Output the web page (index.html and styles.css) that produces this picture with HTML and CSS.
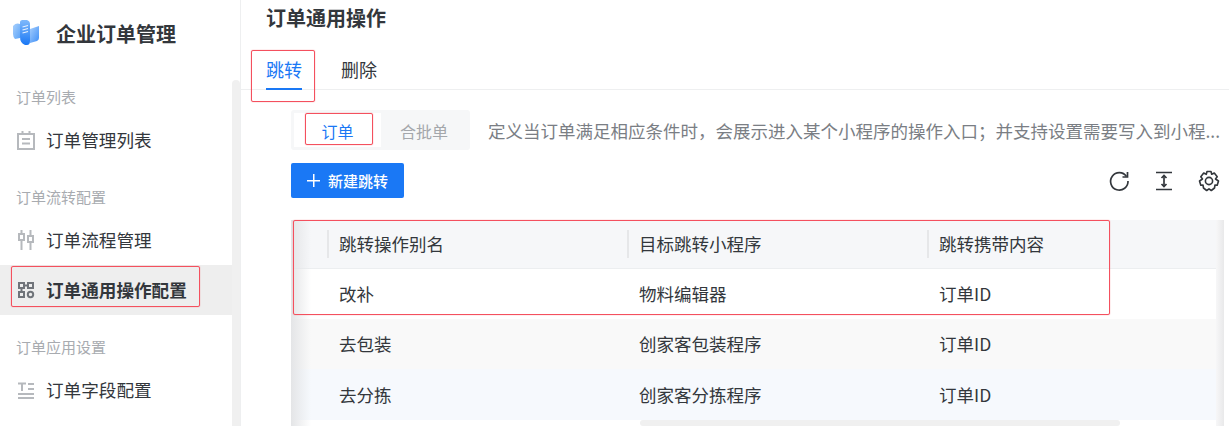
FILE: index.html
```html
<!DOCTYPE html>
<html lang="zh-CN">
<head>
	<meta charset="UTF-8">
	<title>订单通用操作</title>
	<link rel="stylesheet" href="styles.css">
</head>
<body>
	<div class="page">
		<aside class="side">
			<div class="brand">
				<svg class="logo" width="28" height="28" viewBox="0 0 28 28">
					<defs>
						<linearGradient id="logoA" x1="0" y1="0" x2="1" y2="1">
							<stop offset="0" stop-color="#a9d0fc"/>
							<stop offset="1" stop-color="#5ea5f8"/>
						</linearGradient>
						<linearGradient id="logoB" x1="0" y1="0" x2="0" y2="1">
							<stop offset="0" stop-color="#7fb9fb"/>
							<stop offset="1" stop-color="#1a78f5"/>
						</linearGradient>
						<linearGradient id="logoC" x1="0" y1="0" x2="1" y2="1">
							<stop offset="0" stop-color="#a5cdfc"/>
							<stop offset="1" stop-color="#3f8ff7"/>
						</linearGradient>
					</defs>
					<path d="M1 7 Q4 3.500 8 5 V19 L3 20 Q1 18 1 15Z" fill="url(#logoA)"/>
					<path d="M8 3 Q8 1.500 10 1 L15 1 Q18 2 18 5 V22 Q18 26 15 26 L13 26 Q8 24 8 18Z" fill="url(#logoB)"/>
					<path d="M10.500 8L16 6.500M10.500 11L16 9.500M10.500 14L16 12.500" stroke="#e6f1fe" stroke-width="1.100" fill="none"/>
					<path d="M18 10 L27 7 V19 Q27 21 25 22 L18 24Z" fill="url(#logoC)"/>
				</svg>
				<span class="brand-name">企业订单管理</span>
			</div>
			<div class="side-body">
				<div class="menu">
					<div class="group">订单列表</div>
					<div class="item">
						<svg class="ico" width="18" height="20" viewBox="0 0 18 20" fill="none" stroke="#b6b9bd" stroke-width="2">
							<path d="M1 4H17V19H1Z"/><path d="M5.500 1V5M12.500 1V5M5 9H13M5 13.500H13"/>
						</svg>
						<span>订单管理列表</span>
					</div>
					<div class="group">订单流转配置</div>
					<div class="item">
						<svg class="ico" width="18" height="20" viewBox="0 0 18 20" fill="none" stroke="#b6b9bd" stroke-width="2">
							<path d="M4.500 0V4M4.500 10V20M13.500 0V6M13.500 12V20"/><rect x="2" y="4" width="5" height="6"/><rect x="11" y="6" width="5" height="6"/>
						</svg>
						<span>订单流程管理</span>
					</div>
					<div class="item active">
						<svg class="ico" width="18" height="18" viewBox="0 0 18 18" fill="none" stroke="#70747a" stroke-width="2">
							<rect x="2" y="2" width="5" height="5"/><rect x="11" y="2" width="5" height="5"/><rect x="2" y="11" width="5" height="5"/><circle cx="13.500" cy="13.500" r="2.700"/>
							<path d="M7 4.500H11M4.500 7V11"/>
						</svg>
						<span>订单通用操作配置</span>
					</div>
					<div class="group">订单应用设置</div>
					<div class="item">
						<svg class="ico" width="18" height="18" viewBox="0 0 18 18" fill="none" stroke="#b6b9bd" stroke-width="2">
							<path d="M1 2.500H9M5 2.500V10M11 3H17M11 8H17M1 13H17M1 17H17"/>
						</svg>
						<span>订单字段配置</span>
					</div>
				</div>
				<div class="side-scroll"></div>
			</div>
		</aside>

		<main class="main">
			<h1 class="title">订单通用操作</h1>
			<div class="tabs">
				<div class="tab on">跳转</div>
				<div class="tab">删除</div>
			</div>
			<div class="content">
				<div class="bar">
					<div class="switch">
						<div class="switch-item on">订单</div>
						<div class="switch-item">合批单</div>
					</div>
					<p class="desc">定义当订单满足相应条件时，会展示进入某个小程序的操作入口；并支持设置需要写入到小程...</p>
				</div>
				<div class="tools">
					<button class="btn"><span class="plus"></span>新建跳转</button>
					<div class="tool-icons">
						<svg width="22" height="22" viewBox="0 0 22 22" fill="none" stroke="#33373c" stroke-width="1.700">
							<path d="M18.500 6.500A8.700 8.700 0 1 0 20 11"/><path d="M19.500 2V7H14.500"/>
						</svg>
						<svg width="22" height="22" viewBox="0 0 22 22" fill="none" stroke="#33373c" stroke-width="1.700">
							<path d="M3 2.500H19M3 19.500H19M11 6V16"/><path d="M8.500 8L11 5.500L13.500 8M8.500 14L11 16.500L13.500 14"/>
						</svg>
						<svg width="22" height="22" viewBox="0 0 22 22" fill="none" stroke="#33373c" stroke-width="1.600">
							<path d="M9 1.500H13L13.700 4.300L16.300 3L19.200 6.700L17.500 9L20.500 11L19.200 15.300L17 15L16.500 18L13.300 20.500L11 18.800L8.700 20.500L5.500 18L5 15L2.800 15.300L1.500 11L4.500 9L2.800 6.700L5.700 3L8.300 4.300Z" stroke-linejoin="round"/><circle cx="11" cy="11" r="3.600"/>
						</svg>
					</div>
				</div>
				<div class="table-wrap">
					<table class="table">
						<thead>
							<tr><th class="gutter"></th><th>跳转操作别名</th><th>目标跳转小程序</th><th>跳转携带内容</th></tr>
						</thead>
						<tbody>
							<tr><td class="gutter"></td><td>改补</td><td>物料编辑器</td><td>订单ID</td></tr>
							<tr class="gray"><td class="gutter"></td><td>去包装</td><td>创家客包装程序</td><td>订单ID</td></tr>
							<tr class="blue"><td class="gutter"></td><td>去分拣</td><td>创家客分拣程序</td><td>订单ID</td></tr>
						</tbody>
					</table>
					<div class="shade-left"></div>
					<div class="shade-right"></div>
				</div>
				<div class="h-scroll"><div class="h-thumb"></div></div>
			</div>
		</main>
	</div>

	<!-- 红框标注 -->
	<div class="mark mark-menu"></div>
	<div class="mark mark-tab"></div>
	<div class="mark mark-switch"></div>
	<div class="mark mark-table"></div>
</body>
</html>
```

FILE: styles.css
```css
* {
	box-sizing: border-box;
}
html, body {
	margin: 0;
	padding: 0;
	height: 426px;
	overflow: hidden;
}
body {
	position: relative;
	font-family: "Noto Sans CJK SC", "Liberation Sans", sans-serif;
	color: #33373c;
	background: #fff;
}
.page {
	display: flex;
	height: 426px;
}

/* 左侧菜单 */
.side {
	flex: none;
	width: 241px;
	border-right: 1px solid #eeeff0;
}
.brand {
	display: flex;
	align-items: center;
	height: 66px;
	padding-left: 12px;
}
.logo {
	margin-right: 16px;
}
.brand-name {
	font-size: 20px;
	font-weight: 700;
	color: #33373c;
}
.side-body {
	display: flex;
	height: 360px;
}
.menu {
	flex: 1;
	padding-top: 14px;
}
.side-scroll {
	flex: none;
	width: 8px;
	margin-top: 14px;
	background: #f0f0f0;
	border-radius: 4px 4px 0 0;
}
.group {
	height: 34px;
	margin-bottom: 1px;
	padding-left: 16px;
	font-size: 15px;
	line-height: 34px;
	color: #a8abb0;
}
.group:not(:first-child) {
	margin-top: 15px;
}
.item {
	display: flex;
	align-items: center;
	height: 50px;
	padding-left: 17px;
	font-size: 17.600px;
	color: #33373c;
}
.item span {
	margin-top: -2px;
}
.item .ico {
	margin-right: 11px;
}
.item.active {
	font-weight: 700;
	background: #eeeeee;
}

/* 右侧内容 */
.main {
	flex: 1;
	min-width: 0;
}
.title {
	margin: 0;
	height: 38px;
	padding-left: 25px;
	font-size: 20px;
	font-weight: 700;
	line-height: 36px;
}
.tabs {
	display: flex;
	gap: 39px;
	height: 52px;
	padding-left: 25px;
	border-bottom: 1px solid #eeeff0;
}
.tab {
	height: 52px;
	padding-top: 19px;
	font-size: 18px;
	line-height: 24px;
	color: #33373c;
}
.tab.on {
	color: #1a78f5;
	border-bottom: 2px solid #1a78f5;
}
.content {
	padding: 20px 0 0 50px;
}
.bar {
	display: flex;
	align-items: center;
	height: 40px;
}
.switch {
	display: flex;
	flex: none;
	height: 40px;
	padding: 3px;
	background: #f6f7f8;
	border-radius: 3px;
}
.switch-item {
	width: 87px;
	font-size: 16px;
	line-height: 36px;
	text-align: center;
	color: #a4a7ab;
	white-space: nowrap;
}
.switch-item.on {
	color: #1a78f5;
	background: #fff;
}
.switch-item:last-child {
	width: 86px;
}
.desc {
	margin: 0 0 0 18px;
	font-size: 17.500px;
	color: #7a7e84;
	white-space: nowrap;
}
.tools {
	display: flex;
	align-items: center;
	justify-content: space-between;
	margin-top: 13px;
	height: 35px;
}
.btn {
	display: flex;
	align-items: center;
	width: 113px;
	height: 35px;
	padding: 0 0 0 16px;
	border: 0;
	border-radius: 2px;
	font: 500 15px "Noto Sans CJK SC", "Liberation Sans", sans-serif;
	color: #fff;
	background: #1a78f5;
}
.plus {
	width: 13px;
	height: 13px;
	margin-right: 8px;
	background: linear-gradient(#fff, #fff) center / 100% 1.500px no-repeat, linear-gradient(#fff, #fff) center / 1.500px 100% no-repeat;
}
.tool-icons {
	display: flex;
	gap: 23px;
	padding-right: 9px;
}
.table-wrap {
	position: relative;
	margin-top: 22px;
	width: 933px;
}
.table {
	width: 100%;
	border-collapse: separate;
	border-spacing: 0;
	table-layout: fixed;
	font-size: 17.500px;
}
.table th {
	position: relative;
	height: 49px;
	padding: 0 0 1px 12px;
	font-weight: 400;
	text-align: left;
	background: #f6f7f9;
	border-bottom: 1px solid #eceef0;
}
.table th:not(.gutter)::before {
	content: "";
	position: absolute;
	left: 0;
	top: 10px;
	width: 2px;
	height: 28px;
	background: #e6e7e9;
}
.table td {
	height: 50px;
	padding: 0 0 2px 12px;
}
.table tr.blue td {
	height: 51px;
	padding-bottom: 1px;
}
.table .gutter {
	width: 36px;
	padding: 0;
}
.table th:nth-child(2), .table th:nth-child(3) {
	width: 300px;
}
.table tr.gray td {
	background: #f9f9f9;
}
.table tr.blue td {
	background: #f6f9fd;
}
.shade-left {
	position: absolute;
	left: 0;
	top: 0;
	bottom: -6px;
	width: 20px;
	background: linear-gradient(to right, #e4e5e7, rgba(240, 240, 242, 0));
}
.shade-right {
	position: absolute;
	right: 0;
	top: 0;
	bottom: -6px;
	width: 8px;
	background: linear-gradient(to right, #f7f7f8, #e9e9ea);
}
.h-scroll {
	width: 933px;
	height: 6px;
	padding-left: 349px;
}
.h-thumb {
	width: 480px;
	height: 6px;
	background: #f0f0f0;
	border-radius: 3px;
}

/* 红框标注 */
.mark {
	position: absolute;
	border: 1px solid #f4505e;
	border-radius: 2px;
	box-shadow: 0 0 1px #f4505e;
}
.mark-menu {
	left: 11px;
	top: 266px;
	width: 189px;
	height: 41px;
}
.mark-tab {
	left: 251px;
	top: 50px;
	width: 64px;
	height: 52px;
}
.mark-switch {
	left: 305px;
	top: 113px;
	width: 68px;
	height: 32px;
}
.mark-table {
	left: 293px;
	top: 220px;
	width: 817px;
	height: 95px;
}
```
